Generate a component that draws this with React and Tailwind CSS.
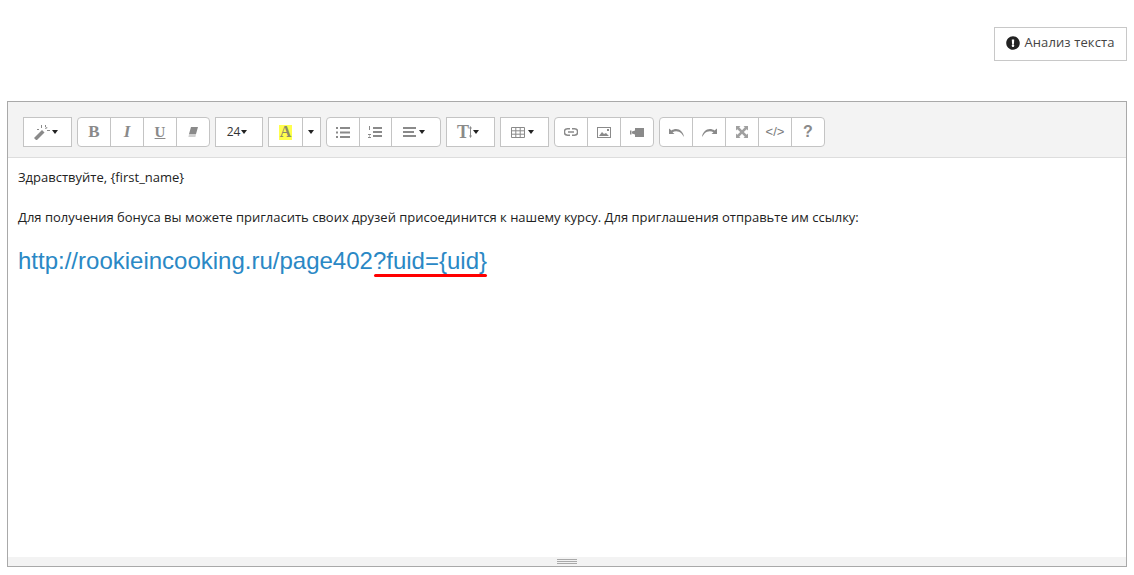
import { FaExclamationCircle } from "react-icons/fa";

function Caret() {
  return <span className="inline-block border-x-[3.5px] border-t-[4px] border-x-transparent border-t-[#222]" />;
}

function Btn({ w = "flex-1", children }) {
  return (
    <div className={`${w} h-full flex items-center justify-center gap-[2px] border-l border-[#c4c4c4] first:border-l-0 text-[#8a8a8a]`}>
      {children}
    </div>
  );
}

function Group({ w, rounded, children }) {
  return (
    <div className={`${w} flex h-[30px] bg-white border border-[#c4c4c4] ${rounded ? "rounded-[4px]" : ""}`}>{children}</div>
  );
}

function Icon({ w = 14, h = 12, className = "", children }) {
  return (
    <svg width={w} height={h} viewBox={`0 0 ${w} ${h}`} fill="#8a8a8a" className={className}>
      {children}
    </svg>
  );
}

function App() {
  return (
    <div className="w-[1134px] h-[575px] bg-white px-[7px] font-['Open_Sans',sans-serif] overflow-hidden">
      <div className="h-[101px] pt-[27px] flex justify-end">
        <div className="w-[133px] h-[34px] pb-[2px] flex items-center justify-center gap-[4px] border border-[#c8c8c8] text-[13px] tracking-[0.1px] text-[#444]">
          <FaExclamationCircle className="text-[14px] text-[#222]" />
          <span>Анализ текста</span>
        </div>
      </div>

      <div className="w-[1120px] h-[466px] border border-[#a9a9a9] flex flex-col">
        <div className="h-[56px] bg-[#f3f3f3] border-b border-[#dddddd] pl-[15px] pt-[15px] flex gap-[5px]">
          <Group w="w-[49px]">
            <Btn>
              <div className="flex items-center gap-[2px] pr-[4px]">
                <Icon w={16} h={15}>
                  <path d="M0 13l8-8 2.500 2.500-8 8z" />
                  <path d="M7 0h1v3H7zM11 0h1v2h-1zM13 5h3v1h-3zM3 4h2v1H3zM11 3l2-1 .5 1-2 1z" />
                </Icon>
                <Caret />
              </div>
            </Btn>
          </Group>
          <Group w="w-[133px]" rounded>
            <Btn><span className="font-['Liberation_Serif',serif] font-bold text-[17px]">B</span></Btn>
            <Btn><span className="font-['Liberation_Serif',serif] italic font-bold text-[17px]">I</span></Btn>
            <Btn><span className="font-['Liberation_Serif',serif] font-bold text-[15px] underline">U</span></Btn>
            <Btn>
              <Icon w={10} h={10}>
                <path d="M3 0h7L8 7H1z" />
                <path d="M1 7h7l-.6 3H.4z" fill="#d0d0d0" />
              </Icon>
            </Btn>
          </Group>
          <Group w="w-[48px]">
            <Btn>
              <div className="flex items-center gap-[1px] pr-[4px]">
                <span className="text-[12px] text-[#333]">24</span>
                <Caret />
              </div>
            </Btn>
          </Group>
          <Group w="w-[53px]">
            <Btn w="w-[33px]">
              <span className="bg-[#ffff4d] w-[13px] h-[15px] flex items-center justify-center font-['Liberation_Serif',serif] font-bold text-[16px] text-[#8a8a6a]">A</span>
            </Btn>
            <Btn w="w-[18px]">
              <div className="flex pr-[2px]"><Caret /></div>
            </Btn>
          </Group>
          <Group w="w-[115px]" rounded>
            <Btn>
              <Icon w={14} h={11}>
                <path d="M0 0h2v2H0zM0 4.500h2v2H0zM0 9h2v2H0zM4 0h10v2H4zM4 4.500h10v2H4zM4 9h10v2H4z" />
              </Icon>
            </Btn>
            <Btn>
              <Icon w={14} h={12}>
                <path d="M1 0h1v4H1zM0 8h3v1H0zM0 11h3v1H0zM1 9.500h1v1H1zM5 1h9v2H5zM5 5h9v2H5zM5 9h9v2H5z" />
              </Icon>
            </Btn>
            <Btn w="w-[49px]">
              <div className="flex items-center pr-[5px]">
                <Icon w={13} h={10} className="mr-[3px]">
                  <path d="M0 0h13v2H0zM0 4h11v2H0zM0 8h13v2H0z" />
                </Icon>
                <Caret />
              </div>
            </Btn>
          </Group>
          <Group w="w-[49px]">
            <Btn>
              <div className="flex items-center gap-[1px] pr-[5px]">
                <span className="font-['Liberation_Serif',serif] font-bold text-[18px]">T</span>
                <Icon w={3} h={12} className="-ml-[1px]">
                  <path d="M1 2h1v8H1zM1.500 0L3 2.500H0zM1.500 12L0 9.500h3z" />
                </Icon>
                <Caret />
              </div>
            </Btn>
          </Group>
          <Group w="w-[49px]">
            <Btn>
              <div className="flex items-center pr-[5px]">
                <svg width="14" height="11" viewBox="0 0 14 11" fill="none" stroke="#8a8a8a" strokeWidth="1" className="mr-[3px]">
                  <path d="M.5.5h13v10H.5zM.5 3.800h13M.5 7.200h13M4.800.5v10M9.200.5v10" />
                </svg>
                <Caret />
              </div>
            </Btn>
          </Group>
          <Group w="w-[100px]" rounded>
            <Btn>
              <svg width="14" height="8" viewBox="0 0 14 8" fill="none" stroke="#8a8a8a" strokeWidth="1.600">
                <path d="M6 .8H3.500a3.200 3.200 0 000 6.400H6M8 .8h2.500a3.200 3.200 0 010 6.400H8M4 4h6" />
              </svg>
            </Btn>
            <Btn>
              <Icon w={14} h={11}>
                <path d="M0 0h14v11H0zM1 1v9h12V1z" />
                <path d="M2 9l3-4 2 2 2-1 3 3z" />
                <path d="M10 2h2v2h-2z" />
              </Icon>
            </Btn>
            <Btn>
              <Icon w={14} h={9}>
                <path d="M5 0h9v9H5zM0 2.500h1.500v4H0zM2 3.500l3-1v4l-3-1z" />
              </Icon>
            </Btn>
          </Group>
          <Group w="w-[166px]" rounded>
            <Btn>
              <Icon w={15} h={9}>
                <path d="M0 .5v5.500h5.500L3.500 4.300C6 2.500 10 2.800 12.500 5.500L15 9C14.500 4.500 11 1 7 1 5.500 1 3.800 1.500 2.500 2.500z" />
              </Icon>
            </Btn>
            <Btn>
              <Icon w={15} h={9} className="-scale-x-100">
                <path d="M0 .5v5.500h5.500L3.500 4.300C6 2.500 10 2.800 12.500 5.500L15 9C14.500 4.500 11 1 7 1 5.500 1 3.800 1.500 2.500 2.500z" />
              </Icon>
            </Btn>
            <Btn>
              <svg width="12" height="12" viewBox="0 0 12 12" fill="#a0a0a0">
                <path d="M0 0h4.500L3.200 1.300 6 4.200 8.800 1.300 7.500 0H12v4.500L10.700 3.200 7.800 6l2.900 2.800L12 7.500V12H7.500l1.300-1.300L6 7.800 3.200 10.700 4.500 12H0V7.500l1.300 1.300L4.200 6 1.300 3.200 0 4.500z" />
              </svg>
            </Btn>
            <Btn><span className="font-['Liberation_Sans',sans-serif] text-[13px] text-[#7a7a7a]">&lt;/&gt;</span></Btn>
            <Btn><span className="font-['Liberation_Sans',sans-serif] font-bold text-[16px]">?</span></Btn>
          </Group>
        </div>

        <div className="flex-1 px-[10px] pt-[9px] text-[13px] leading-[20px] text-[#222]">
          <p>Здравствуйте, {"{first_name}"}</p>
          <p className="mt-[20px]">
            Для получения бонуса вы можете пригласить своих друзей присоединится к нашему курсу. Для приглашения отправьте им ссылку:
          </p>
          <p className="mt-[18px] font-['Liberation_Sans',sans-serif] text-[24px] leading-[32px] text-[#2a88c5]">
            http://rookieincooking.ru/page402
            <span className="relative">
              ?fuid={"{uid}"}
              <span className="absolute left-[1px] right-0 top-[27px] h-[3px] bg-[#ff0000] rounded-full" />
            </span>
          </p>
        </div>

        <div className="h-[9px] bg-[#f3f3f3] flex flex-col items-center justify-center gap-[1px]">
          <span className="w-[20px] h-px bg-[#a9a9a9]" />
          <span className="w-[20px] h-px bg-[#a9a9a9]" />
          <span className="w-[20px] h-px bg-[#a9a9a9]" />
        </div>
      </div>
    </div>
  );
}

export default App;
